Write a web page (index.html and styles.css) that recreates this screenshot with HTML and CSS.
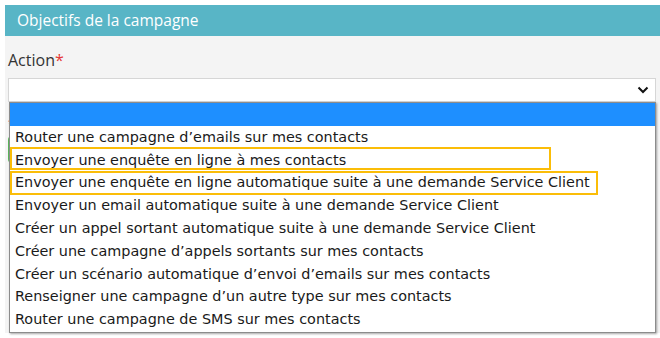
FILE: index.html
```html
<!DOCTYPE html>
<html lang="fr">
<head>
    <meta charset="UTF-8">
    <title>Objectifs de la campagne</title>
    <link rel="stylesheet" href="styles.css">
</head>
<body>
    <div class="panel">
        <div class="panel-header">Objectifs de la campagne</div>
        <div class="panel-body">
            <label class="field-label">Action<span class="required">*</span></label>
            <div class="select-box">
                <svg class="chevron" width="12" height="8" viewBox="0 0 12 8">
                    <path d="M1.5 1.5 L6 6 L10.5 1.5" fill="none" stroke="#111" stroke-width="2"/>
                </svg>
            </div>
            <div class="hint"><span class="required">*</span></div>
            <div class="submit-btn"></div>

            <ul class="dropdown">
                <li class="selected">&nbsp;</li>
                <li>Router une campagne d’emails sur mes contacts</li>
                <li>Envoyer une enquête en ligne à mes contacts</li>
                <li>Envoyer une enquête en ligne automatique suite à une demande Service Client</li>
                <li>Envoyer un email automatique suite à une demande Service Client</li>
                <li>Créer un appel sortant automatique suite à une demande Service Client</li>
                <li>Créer une campagne d’appels sortants sur mes contacts</li>
                <li>Créer un scénario automatique d’envoi d’emails sur mes contacts</li>
                <li>Renseigner une campagne d’un autre type sur mes contacts</li>
                <li>Router une campagne de SMS sur mes contacts</li>
            </ul>
            <div class="mark mark-1"></div>
            <div class="mark mark-2"></div>
        </div>
    </div>
</body>
</html>
```

FILE: styles.css
```css
* {
    margin: 0;
    padding: 0;
    box-sizing: border-box;
}

body {
    background: white;
    font-family: 'Open Sans', sans-serif;
    color: #333;
    width: 660px;
    height: 338px;
    overflow: hidden;
}

.panel {
    margin: 5px 0 0 5px;
}

.panel-header {
    background: #58b5c6;
    color: white;
    font-size: 15.5px;
    height: 31px;
    line-height: 30px;
    padding-left: 12px;
}

.panel-body {
    position: relative;
    background: #f4f4f4;
    height: 297px;
    padding: 0 4px 0 3px;
}

.field-label {
    display: block;
    padding-top: 13px;
    font-size: 16px;
    line-height: 22px;
    color: #333;
}

.required {
    color: #e53935;
}

.select-box {
    margin-top: 7px;
    height: 24px;
    background: white;
    border: 1px solid #d6d6d6;
    display: flex;
    align-items: center;
    justify-content: flex-end;
    padding-right: 6px;
}

.hint {
    margin-top: 16px;
    font-size: 10px;
    line-height: 10px;
}

.submit-btn {
    margin-top: 8px;
    width: 80px;
    height: 27px;
    background: #5cb85c;
    border-radius: 4px;
}

.dropdown {
    position: absolute;
    left: 4px;
    top: 66px;
    width: 647px;
    height: 231px;
    list-style: none;
    background: white;
    border: 1px solid #8c8c8c;
    box-shadow: 1px 1px 2px rgba(0, 0, 0, 0.35);
    font-family: 'DejaVu Sans', sans-serif;
    font-size: 14.4px;
    color: #1a1a1a;
}

.dropdown li {
    height: 22.8px;
    line-height: 22.8px;
    padding-left: 5px;
    white-space: nowrap;
}

.dropdown li.selected {
    background: #1e8fff;
}

.mark {
    position: absolute;
    border: 2px solid #fbbd08;
}

.mark-1 {
    left: 5px;
    top: 111px;
    width: 541px;
    height: 23px;
}

.mark-2 {
    left: 5px;
    top: 135px;
    width: 588px;
    height: 24px;
}
```
